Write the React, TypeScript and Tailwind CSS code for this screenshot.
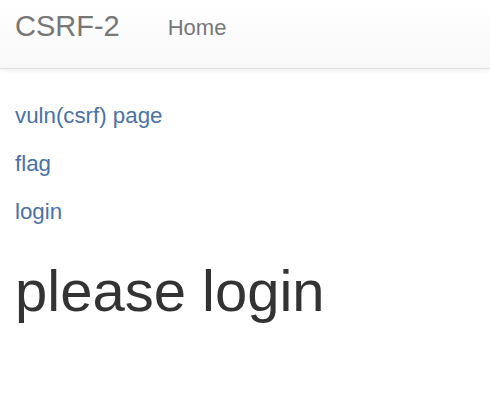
export default function App() {
  return (
    <div className="min-h-screen bg-white font-['Liberation_Sans',Arial,sans-serif] text-[#333]">
      {/* navbar */}
      <nav className="flex h-[69px] items-center border-b border-[#e2e2e2] bg-gradient-to-b from-white to-[#f8f8f8] px-[15px] pb-[14px] shadow-[0_1px_5px_rgba(0,0,0,0.075)]">
        <a className="text-[29px] text-[#777]">CSRF-2</a>
        <a className="ml-[48px] text-[22px] text-[#777]">Home</a>
      </nav>

      <div className="px-[15px] pt-[32px]">
        <p className="mb-[18px] text-[22.3px] leading-[30px]">
          <a className="text-[#4a72a8]">vuln(csrf) page</a>
        </p>
        <p className="mb-[18px] text-[22.3px] leading-[30px]">
          <a className="text-[#4a72a8]">flag</a>
        </p>
        <p className="mb-[18px] text-[22.3px] leading-[30px]">
          <a className="text-[#4a72a8]">login</a>
        </p>
        <h1 className="mt-[31px] text-[58px] leading-[66px]">please login</h1>
      </div>
    </div>
  );
}
